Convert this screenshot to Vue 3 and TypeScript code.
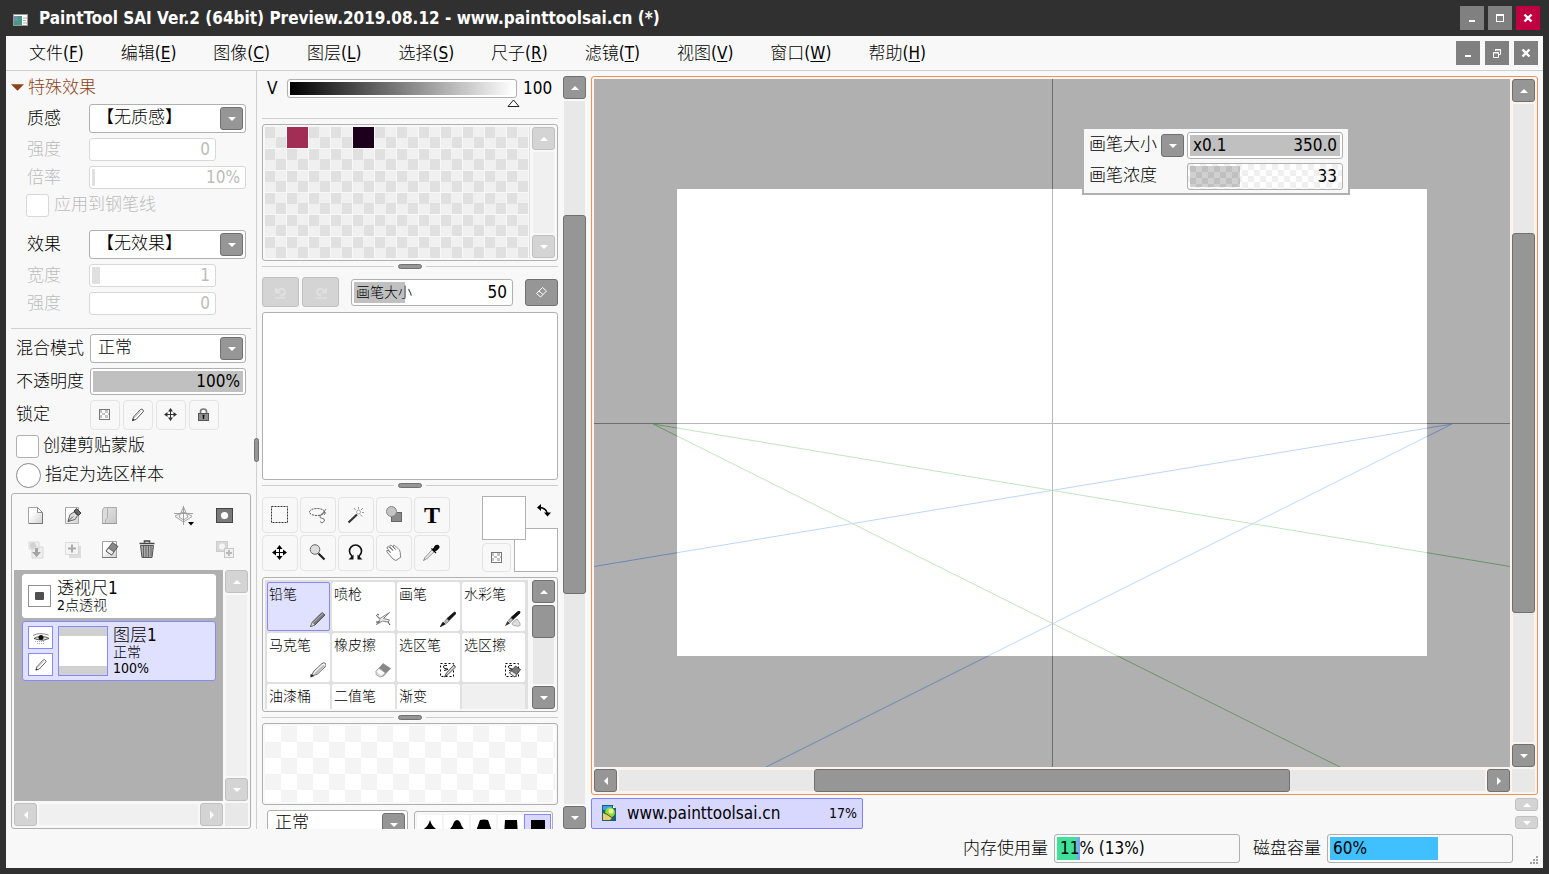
<script setup lang="ts">
import { ref } from 'vue'

interface Menu { name: string; key: string }
const menus: Menu[] = [
  { name: '文件', key: 'F' },
  { name: '编辑', key: 'E' },
  { name: '图像', key: 'C' },
  { name: '图层', key: 'L' },
  { name: '选择', key: 'S' },
  { name: '尺子', key: 'R' },
  { name: '滤镜', key: 'T' },
  { name: '视图', key: 'V' },
  { name: '窗口', key: 'W' },
  { name: '帮助', key: 'H' },
]

const locks = [
  { icon: 'checker', label: '锁定透明像素' },
  { icon: 'pencil', label: '锁定绘画' },
  { icon: 'move-small', label: '锁定移动' },
  { icon: 'lock', label: '全部锁定' },
]

const layerTools = [
  { icon: 'page', label: '新建图层', off: false },
  { icon: 'page-pen', label: '新建钢笔图层', off: false },
  { icon: 'folder', label: '新建图层组', off: false },
  { icon: '', label: '', off: false },
  { icon: 'perspective', label: '透视尺', off: false },
  { icon: 'mask', label: '图层蒙版', off: false },
  { icon: 'merge-down', label: '向下合并', off: true },
  { icon: 'add-down', label: '转写', off: true },
  { icon: 'page-erase', label: '清除图层', off: false },
  { icon: 'trash', label: '删除图层', off: false },
  { icon: '', label: '', off: false },
  { icon: 'mask-add', label: '应用蒙版', off: true },
]

const tools = [
  { icon: 'marquee', label: '选框' },
  { icon: 'lasso', label: '套索' },
  { icon: 'wand', label: '魔棒' },
  { icon: 'shape', label: '形状' },
  { icon: '', label: '文字' },
  { icon: 'move', label: '移动' },
  { icon: 'zoom', label: '缩放' },
  { icon: 'rotate', label: '旋转' },
  { icon: 'hand', label: '抓手' },
  { icon: 'dropper', label: '吸管' },
]

const brushes = [
  { name: '铅笔', icon: 'b-pencil' },
  { name: '喷枪', icon: 'b-air' },
  { name: '画笔', icon: 'b-brush' },
  { name: '水彩笔', icon: 'b-water' },
  { name: '马克笔', icon: 'b-marker' },
  { name: '橡皮擦', icon: 'b-eraser' },
  { name: '选区笔', icon: 'b-selpen' },
  { name: '选区擦', icon: 'b-selerase' },
  { name: '油漆桶', icon: '' },
  { name: '二值笔', icon: '' },
  { name: '渐变', icon: '' },
]

const swatches: Record<number, string> = { 1: '#a22e56', 4: '#1c001c' }

const tips = [
  'M10 4 Q12 12 20 15 V20 H0 V15 Q8 12 10 4Z',
  'M7 6 Q10 2 13 6 Q15 12 19 15 V20 H1 V15 Q5 12 7 6Z',
  'M6 4 Q10 3 14 4 L18 15 V20 H2 V15Z',
  'M4 4H16L17 20H3Z',
  'M3 4H17V20H3Z',
]

const activeBrush = ref(0)
const brushSize = ref(50)
const opacity = ref(100)
const brightness = ref(100)
const density = ref(33)
const scale = ref(10)
const effectWidth = ref(1)
const strength = ref(0)
const effectStrength = ref(0)
const quickSize = ref(350)
</script>

<template>
  <div class="window">
    <svg class="defs" aria-hidden="true">
      <defs>
        <linearGradient id="pg" x1="0" x2="1" y1="0" y2="1"><stop offset=".3" stop-color="#fff" /><stop offset="1" stop-color="#cfcfcf" /></linearGradient>
        <linearGradient id="fg" x1="0" x2="1" y1="0" y2="1"><stop offset="0" stop-color="#e6e6e6" /><stop offset="1" stop-color="#c6c6c6" /></linearGradient>
        <symbol id="up" viewBox="0 0 8 4"><path d="M4 0 8 4H0Z" fill="#fff" /></symbol>
        <symbol id="down" viewBox="0 0 8 4"><path d="M0 0H8L4 4Z" fill="#fff" /></symbol>
        <symbol id="left" viewBox="0 0 4 8"><path d="M4 0V8L0 4Z" fill="#fff" /></symbol>
        <symbol id="right" viewBox="0 0 4 8"><path d="M0 0V8L4 4Z" fill="#fff" /></symbol>
        <symbol id="checker" viewBox="0 0 24 24">
          <rect x="6.500" y="6.500" width="10" height="10" fill="#fff" stroke="#777" /><path d="M7 7h2v3h-2zM12 7h3v3h-3zM9 10h3v2h-3zM15 10h1v2h-1zM7 12h2v3h-2zM12 12h3v3h-3z" fill="#c4c4c4" />
        </symbol>
        <symbol id="pencil" viewBox="0 0 24 24">
          <path d="M6.500 17.500 7.500 14 14.500 6.500Q16 5.500 17 7T17 9L10 16.500Z" fill="#fff" stroke="#555" /><path d="M8 15 15 8" stroke="#999" stroke-width=".6" /><path d="M6 18 8.500 17 7 15.500Z" fill="#222" />
        </symbol>
        <symbol id="move-small" viewBox="0 0 24 24">
          <path d="M11.500 7V16M7 11.500H16" stroke="#333" fill="none" /><path d="M11.500 5 14 8.500H9ZM11.500 18 14 14.500H9ZM5 11.500 8.500 9V14ZM18 11.500 14.500 9V14Z" fill="#333" />
        </symbol>
        <symbol id="lock" viewBox="0 0 24 24">
          <path d="M8.500 11V8.500Q8.500 6 11.500 6T14.500 8.500V11" stroke="#777" stroke-width="1.600" fill="none" /><rect x="6.500" y="10.500" width="10" height="7" fill="#909090" stroke="#555" /><path d="M11.500 12V16M10.500 12.500h2" stroke="#111" stroke-width="1.400" />
        </symbol>
        <symbol id="page" viewBox="0 0 24 24">
          <path d="M4.500 3.500H13.500L18.500 8.500V19.500H4.500Z" fill="url(#pg)" stroke="#a4a4a4" /><path d="M13.500 3.500V8.500H18.500Z" fill="#fff" stroke="#777" stroke-width=".8" /><path d="M5 19.500H19M18.500 9V19" stroke="#777" />
        </symbol>
        <symbol id="page-pen" viewBox="0 0 24 24">
          <path d="M4.500 3.500H17.500V19.500H4.500Z" fill="url(#pg)" stroke="#a8a8a8" /><path d="M7 17.500 9 10.500 13 8 16.500 11.500 14 15.500Z" fill="#ddd" stroke="#444" stroke-width=".8" /><path d="M7 17.500 12 12.500" stroke="#333" stroke-width=".8" /><path d="M13 7 15.500 4.500 20 9 17.500 11.500Z" fill="#666" stroke="#222" stroke-width=".8" />
        </symbol>
        <symbol id="folder" viewBox="0 0 24 24">
          <path d="M7 3.500H18.500V19.500H4.500V6.500Z" fill="url(#fg)" stroke="#aaa" /><path d="M4.500 19V6L6 3.500H9.500V14L7.500 16V19" fill="#dcdcdc" stroke="#b0b0b0" /><path d="M4 19.500H19" stroke="#999" />
        </symbol>
        <symbol id="perspective" viewBox="0 0 24 24">
          <g fill="none" stroke="#999" stroke-width=".9"><path d="M11.500 2V21M2 9.500H21M3 12.500 11.500 18 20 12.500M11.500 3 7 13 11.500 16 16 13ZM3 12 11.500 8 20 12" /></g><path d="M16 18h6l-3 3.500Z" fill="#000" />
        </symbol>
        <symbol id="mask" viewBox="0 0 24 24"><rect x="3.500" y="4.500" width="16" height="14" fill="#7a7a7a" stroke="#444" /><circle cx="11.500" cy="11.500" r="3.600" fill="#fff" /></symbol>
        <symbol id="merge-down" viewBox="0 0 24 24">
          <path d="M5 4h10v7h-10zM8 9h11v11H8z" fill="#eee" stroke="#d8d8d8" /><circle cx="9" cy="7.500" r="3" fill="#d0d0d0" /><path d="M11 10h3v4h3l-4.500 5L8 14h3z" fill="#a4a4a4" />
        </symbol>
        <symbol id="add-down" viewBox="0 0 24 24">
          <path d="M8 8h12v12H8z" fill="#ddd" /><rect x="4.500" y="4.500" width="13" height="12" fill="#f4f4f4" stroke="#c4c4c4" stroke-dasharray="1 1" /><path d="M11 6.500v8M7 10.500h8" stroke="#aaa" stroke-width="2" />
        </symbol>
        <symbol id="page-erase" viewBox="0 0 24 24">
          <path d="M4.500 3.500H18.500V19.500H4.500Z" fill="url(#pg)" stroke="#a0a0a0" /><path d="M8 13 14.500 4.500 20 8.500 13.500 17Z" fill="#888" stroke="#444" stroke-width=".8" /><path d="M8 13 10.500 10 16 14 13.500 17Z" fill="#eee" stroke="#444" stroke-width=".7" /><path d="M4 19.500H19" stroke="#777" />
        </symbol>
        <symbol id="trash" viewBox="0 0 24 24">
          <path d="M5.500 7.500H18.500L17 19.500H7Z" fill="#aaa" stroke="#555" /><path d="M8.500 8V19M11 8V19M13.500 8V19M16 8V18" stroke="#666" /><path d="M4.500 5.500H19.500M9.500 4.500V3H14.500V4.500" stroke="#444" stroke-width="1.600" fill="none" />
        </symbol>
        <symbol id="mask-add" viewBox="0 0 24 24">
          <rect x="3.500" y="3.500" width="11" height="10" fill="#d8d8d8" stroke="#ccc" /><circle cx="9" cy="8.500" r="3" fill="#f4f4f4" /><rect x="11.500" y="10.500" width="9" height="9" fill="#f0f0f0" stroke="#c8c8c8" /><path d="M16 12v6M13 15h6" stroke="#bbb" stroke-width="2" />
        </symbol>
        <symbol id="marquee" viewBox="0 0 24 24"><rect x="3.500" y="3.500" width="16" height="16" fill="none" stroke="#333" stroke-dasharray="2 1" /></symbol>
        <symbol id="lasso" viewBox="0 0 24 24">
          <ellipse cx="11" cy="9" rx="7.500" ry="3.500" fill="none" stroke="#444" stroke-dasharray="2 1" /><path d="M20 6 17 10Q13 12 14 14.500L18 16Q20 18 16 20L14 18.500M18 8Q21 10 18 12" fill="none" stroke="#666" stroke-width=".9" />
        </symbol>
        <symbol id="wand" viewBox="0 0 24 24">
          <path d="M4.500 19.500 13 11.500" stroke="#333" stroke-width="2.200" /><circle cx="14.500" cy="9" r="2" fill="#fff" stroke="#aaa" /><path d="M14.500 4v2M19 5l-2 2M20 9.500h-2M18 13.500l-1.500-2M10 5l1.500 2" stroke="#999" />
        </symbol>
        <symbol id="shape" viewBox="0 0 24 24"><rect x="9.500" y="9.500" width="10" height="9" fill="#8a8a8a" stroke="#666" /><circle cx="9.500" cy="8.500" r="5" fill="#c4c4c4" stroke="#888" /></symbol>
        <symbol id="move" viewBox="0 0 24 24">
          <path d="M11.500 6V17M6 11.500H17" stroke="#000" fill="none" /><path d="M11.500 4 14.500 8H8.500ZM11.500 19 14.500 15H8.500ZM4 11.500 8 8.500V14.500ZM19 11.500 15 8.500V14.500Z" fill="#000" />
        </symbol>
        <symbol id="zoom" viewBox="0 0 24 24"><circle cx="9" cy="8.500" r="4.800" fill="#ddd" stroke="#666" /><path d="M12.500 12.500 18.500 18.500" stroke="#222" stroke-width="2.200" /></symbol>
        <symbol id="rotate" viewBox="0 0 24 24"><path d="M8.500 17 7.500 14.500A6 6 0 1 1 15.500 14.500L14.500 17" fill="none" stroke="#111" stroke-width="1.600" /><path d="M9.500 13.500V18.500H4.500ZM13.500 13.500V18.500H18.500Z" fill="#111" /></symbol>
        <symbol id="hand" viewBox="0 0 24 24">
          <path d="M11 18 5 11Q4 9 6 9.500L8.500 11.500 5 7Q5 5 7 6L11 9.500 7.500 5Q8 3.500 9.500 4.500L13.500 8.500 11 5Q12 3.500 13.500 5L17.500 9Q18.500 11 18.500 15L19 16 14 19.500Z" fill="#fff" stroke="#666" stroke-width=".8" />
        </symbol>
        <symbol id="dropper" viewBox="0 0 24 24"><path d="M3.500 19.500 5 16.500 12 9 14 11 7 17.500Z" fill="#eee" stroke="#777" stroke-width=".8" /><path d="M11.500 7.500 16 12M13 9 15 5.500Q17 3.500 18.500 5T17 8.500L14.500 10.500Z" stroke="#000" stroke-width="1.200" fill="#111" /></symbol>
        <symbol id="swap" viewBox="0 0 16 16"><path d="M3.500 4.500Q10.500 5 11.500 11" fill="none" stroke="#000" stroke-width="1.600" /><path d="M5 1V8L1 4.500ZM8 9.500H15L11.500 13.500Z" fill="#000" /></symbol>
        <symbol id="b-pencil" viewBox="0 0 16 16"><path d="M.5 15.500 2.500 11 12 1.500 15 4 5 14Z" fill="#777" stroke="#555" /><path d="M3 12 13 2.500" stroke="#bbb" /><path d="M.5 15.500 2.500 11 5 14Z" fill="#ddd" stroke="#666" stroke-width=".6" /></symbol>
        <symbol id="b-air" viewBox="0 0 16 16"><path d="M1 4 5 7.500 14.500 1.500 8.500 7.500 14.500 9 13 11 7.500 10 1.500 13.500 5 8.500Z" fill="#eee" stroke="#666" stroke-width=".8" /><path d="M1 11h4M13 11l2 3M2 3l2 1" stroke="#444" /></symbol>
        <symbol id="b-brush" viewBox="0 0 16 16"><path d="M7 7.500 14.500 1Q16 1 15.500 3L9 9.500Z" fill="#111" stroke="#111" stroke-width=".8" /><path d="M4.500 10 7 8 9 10 6.500 12.500Z" fill="#bbb" stroke="#555" stroke-width=".6" /><path d="M0 16 3 11 5.500 13Z" fill="#111" stroke="#111" stroke-width=".6" /></symbol>
        <symbol id="b-water" viewBox="0 0 16 16"><path d="M6 6.500 13.500 0Q15.500 0 15 2L8 8.500Z" fill="#111" stroke="#111" stroke-width=".8" /><path d="M3.500 9 6 7 8 9 5 11.500Z" fill="#bbb" stroke="#555" stroke-width=".6" /><path d="M0 15 2.500 10 5 12.500Z" fill="#333" /><path d="M12 8Q16 13 15 14.500T9 14.500 12 8Z" fill="#ddd" stroke="#999" stroke-width=".8" /></symbol>
        <symbol id="b-marker" viewBox="0 0 16 16"><path d="M1.500 13.500 4 9 12 1.500Q14 0 15.500 1.500T15 5L7 12.500Z" fill="#f4f4f4" stroke="#666" /><path d="M5 12 14 3.500" stroke="#bbb" stroke-width="2" /><path d="M.5 12 4.500 14 .5 15.500Z" fill="#222" /></symbol>
        <symbol id="b-eraser" viewBox="0 0 16 16"><path d="M1 9.500 8 1.500 15.500 6.500 8 14.500Z" fill="#888" stroke="#888" stroke-width=".7" /><path d="M1 9.500 4 6 10.500 11 7 14.500Q5 16 1 12.500Z" fill="#ddd" stroke="#999" stroke-width=".8" /><path d="M1.500 9.500 4 7 9.500 11 6.500 13.500Z" fill="#fff" /></symbol>
        <symbol id="b-selpen" viewBox="0 0 16 16"><rect x=".5" y="1.500" width="13" height="13" fill="none" stroke="#000" stroke-dasharray="2 2" /><path d="M7 3.500Q3 3 3.500 5T7 7 4 8.500" fill="none" stroke="#000" /><path d="M4.500 15 6.500 11 14 3 15.500 5 8 12.500Z" fill="#ddd" stroke="#333" stroke-width=".9" /></symbol>
        <symbol id="b-selerase" viewBox="0 0 16 16"><rect x=".5" y="1.500" width="13" height="13" fill="none" stroke="#000" stroke-dasharray="2 2" /><path d="M7 3.500Q3 3 3.500 5T7 7 4 8.500" fill="none" stroke="#000" /><path d="M4.500 11 10.500 4 15.500 7.500 10 15Z" fill="#777" stroke="#444" stroke-width=".9" /><path d="M4.500 11 6.500 9 11.500 12.500 10 15Z" fill="#eee" stroke="#444" stroke-width=".7" /></symbol>
        <symbol id="undo" viewBox="0 0 16 16"><path d="M2 14H13" stroke="#e0e0e0" stroke-width="1.600" /><path d="M2 3V9.500H8.500Z" fill="#e0e0e0" /><path d="M4.500 7.500Q8 3 11 6T9 11.500H7.500" fill="none" stroke="#e0e0e0" stroke-width="2" /></symbol>
        <symbol id="eraser" viewBox="0 0 16 16"><path d="M2.500 9.500 8.500 3.500 12.500 7 6.500 13Z" fill="none" stroke="#fff" /><path d="M5 7 9 10.500" stroke="#fff" /></symbol>
        <symbol id="eye" viewBox="0 0 18 14"><path d="M1 4.500Q7 1 16.500 4" fill="none" stroke="#888" /><path d="M2 7.500Q7 4 15.500 6.500L17 7.500Q12 10.500 5 8.500Z" fill="#ddd" stroke="#333" stroke-width=".8" /><circle cx="9" cy="6.500" r="2.500" fill="#111" /><path d="M3 10.500h10M5 12.500h8" stroke="#aaa" stroke-dasharray="1 1" /></symbol>
      </defs>
    </svg>

    <header class="titlebar">
      <svg class="app-icon" viewBox="0 0 15 12"><rect x=".5" y=".5" width="14" height="11" fill="#fff" stroke="#999" /><path d="M1 2h8v9H1z" fill="#479783" /><path d="M1 2h4v5H1z" fill="#6f8fae" /><path d="M10 4h4M10 6.500h3M10 9h4" stroke="#aaa" /></svg>
      <h1>PaintTool SAI Ver.2 (64bit) Preview.2019.08.12 - www.painttoolsai.cn (*)</h1>
      <button class="wbtn" aria-label="最小化"><svg viewBox="0 0 24 24"><path d="M9 14h6v2H9z" fill="#fff" /></svg></button>
      <button class="wbtn" aria-label="最大化"><svg viewBox="0 0 24 24"><path d="M8 8h8v8H8zM9 10v5h6v-5z" fill="#fff" fill-rule="evenodd" /></svg></button>
      <button class="wbtn close" aria-label="关闭"><svg viewBox="0 0 24 24"><path d="M8.500 8.500 15.500 15.500M15.500 8.500 8.500 15.500" stroke="#fff" stroke-width="2.400" /></svg></button>
    </header>

    <div class="client">
      <nav class="menubar">
        <button v-for="m in menus" :key="m.key" class="menu">{{ m.name }}(<u>{{ m.key }}</u>)</button>
        <div class="mdi">
          <button class="wbtn" aria-label="最小化文档"><svg viewBox="0 0 24 24"><path d="M9 14h6v2H9z" fill="#fff" /></svg></button>
          <button class="wbtn" aria-label="还原文档"><svg viewBox="0 0 24 24"><path d="M10.500 10V8.500H15.500V13.500H14M8.500 11.500H13.500V16.500H8.500ZM8 12H14M10 9H16" fill="none" stroke="#fff" /></svg></button>
          <button class="wbtn" aria-label="关闭文档"><svg viewBox="0 0 24 24"><path d="M8.500 8.500 15.500 15.500M15.500 8.500 8.500 15.500" stroke="#fff" stroke-width="2.400" /></svg></button>
        </div>
      </nav>

      <main class="workspace">
        <aside class="left">
          <h2 class="section"><svg viewBox="0 0 14 7"><path d="M0 0H14L7 7Z" fill="#8c4218" /></svg>特殊效果</h2>
          <div class="form fx">
            <label for="texture">质感</label>
            <span class="combo"><select id="texture"><option>【无质感】</option></select><span class="arrow"><svg><use href="#down" /></svg></span></span>
            <label class="off" for="tex-str">强度</label>
            <span class="bar short dim"><output>{{ strength }}</output><input id="tex-str" v-model.number="strength" type="range" disabled></span>
            <label class="off" for="tex-scale">倍率</label>
            <span class="bar dim"><i :style="{ width: '3px' }" /><output>{{ scale }}%</output><input id="tex-scale" v-model.number="scale" type="range" disabled></span>
          </div>
          <div class="check fx-check off"><input id="pen-line" type="checkbox" disabled><label for="pen-line">应用到钢笔线</label></div>
          <div class="form fx">
            <label for="effect">效果</label>
            <span class="combo"><select id="effect"><option>【无效果】</option></select><span class="arrow"><svg><use href="#down" /></svg></span></span>
            <label class="off" for="eff-w">宽度</label>
            <span class="bar short dim"><i :style="{ width: '8px' }" /><output>{{ effectWidth }}</output><input id="eff-w" v-model.number="effectWidth" type="range" disabled></span>
            <label class="off" for="eff-s">强度</label>
            <span class="bar short dim"><output>{{ effectStrength }}</output><input id="eff-s" v-model.number="effectStrength" type="range" disabled></span>
          </div>
          <hr>
          <div class="form blend">
            <label for="mode">混合模式</label>
            <span class="combo"><select id="mode"><option>正常</option></select><span class="arrow"><svg><use href="#down" /></svg></span></span>
            <label for="opacity">不透明度</label>
            <span class="bar tall"><i :style="{ width: opacity + '%' }" /><output>{{ opacity }}%</output><input id="opacity" v-model.number="opacity" type="range"></span>
            <span>锁定</span>
            <span class="locks"><button v-for="l in locks" :key="l.icon" class="flat" :aria-label="l.label"><svg><use :href="'#' + l.icon" /></svg></button></span>
          </div>
          <div class="check clip"><input id="clip" type="checkbox"><label for="clip">创建剪贴蒙版</label></div>
          <div class="check sample"><input id="sample" type="radio"><label for="sample">指定为选区样本</label></div>

          <section class="layers frame">
            <div class="layer-tools">
              <template v-for="(t, i) in layerTools" :key="i">
                <button v-if="t.icon" class="bare" :aria-label="t.label" :disabled="t.off"><svg><use :href="'#' + t.icon" /></svg></button>
                <span v-else />
              </template>
            </div>
            <div class="layer-body">
              <div class="layer-list">
                <div class="layer ruler">
                  <button class="dot" aria-label="显示透视尺"><b /></button>
                  <div class="ltext"><p>透视尺1</p><p class="sm">2点透视</p></div>
                </div>
                <div class="layer selected">
                  <div class="lbtns">
                    <button aria-label="显示图层"><svg class="eye"><use href="#eye" /></svg></button>
                    <button aria-label="编辑图层"><svg><use href="#pencil" /></svg></button>
                  </div>
                  <div class="thumbnail"><b /></div>
                  <div class="ltext"><p>图层1</p><p class="sm">正常</p><p class="sm">100%</p></div>
                </div>
              </div>
              <div class="sb v dis"><button disabled aria-label="向上"><svg><use href="#up" /></svg></button><div class="track" /><button disabled aria-label="向下"><svg><use href="#down" /></svg></button></div>
              <div class="sb h dis"><button disabled aria-label="向左"><svg><use href="#left" /></svg></button><div class="track" /><button disabled aria-label="向右"><svg><use href="#right" /></svg></button></div>
              <div class="corner" />
            </div>
          </section>
          <span class="vgrip" />
        </aside>

        <aside class="middle">
          <div class="stack">
            <div class="vrow">
              <label for="val">V</label>
              <span class="ramp"><b /><input id="val" v-model.number="brightness" type="range"><svg viewBox="0 0 13 8"><path d="M1 7.500 6.500 1 12 7.500Z" fill="#fff" stroke="#222" /></svg></span>
              <output>{{ brightness }}</output>
            </div>
            <hr>
            <div class="swatches frame">
              <div class="cells"><button v-for="n in 72" :key="n" :aria-label="'色板 ' + n" :class="{ filled: swatches[n - 1] }" :style="{ backgroundColor: swatches[n - 1] }" /></div>
              <div class="sb v dis"><button disabled aria-label="向上"><svg><use href="#up" /></svg></button><div class="track" /><button disabled aria-label="向下"><svg><use href="#down" /></svg></button></div>
            </div>
            <div class="splitter"><b /></div>
            <div class="quick">
              <button class="undo" disabled aria-label="撤销"><svg><use href="#undo" /></svg></button>
              <button class="undo redo" disabled aria-label="重做"><svg><use href="#undo" /></svg></button>
              <span class="bar tall size"><i :style="{ width: '33%' }" /><label for="bsize">画笔大小</label><output>{{ brushSize }}</output><input id="bsize" v-model.number="brushSize" type="range" max="500"></span>
              <button class="erase" aria-label="橡皮"><svg><use href="#eraser" /></svg></button>
            </div>
            <div class="frame scratch" />
            <div class="splitter"><b /></div>
            <div class="toolrow">
              <div class="tools">
                <button v-for="t in tools" :key="t.label" class="flat" :aria-label="t.label"><svg v-if="t.icon"><use :href="'#' + t.icon" /></svg><span v-else class="tee">T</span></button>
              </div>
              <div class="colors">
                <button class="fore" aria-label="前景色" />
                <button class="bare swap" aria-label="交换颜色"><svg><use href="#swap" /></svg></button>
                <button class="flat trans" aria-label="透明色"><svg><use href="#checker" /></svg></button>
                <button class="back" aria-label="背景色" />
              </div>
            </div>
            <div class="brushes frame">
              <div class="bgrid">
                <button v-for="(b, i) in brushes" :key="b.name" :class="{ on: i === activeBrush }" @click="activeBrush = i">{{ b.name }}<svg v-if="b.icon"><use :href="'#' + b.icon" /></svg></button>
                <span class="empty" />
              </div>
              <div class="sb v"><button aria-label="向上"><svg><use href="#up" /></svg></button><div class="track"><b :style="{ top: '0%', height: '42%' }" /></div><button aria-label="向下"><svg><use href="#down" /></svg></button></div>
            </div>
            <div class="splitter"><b /></div>
            <div class="frame preview"><b /></div>
            <div class="shaperow">
              <span class="combo"><select aria-label="笔刷模式"><option>正常</option></select><span class="arrow"><svg><use href="#down" /></svg></span></span>
              <div class="frame tips"><button v-for="(d, i) in tips" :key="i" :class="{ on: i === 4 }" :aria-label="'笔尖 ' + (i + 1)"><svg viewBox="0 0 20 20"><path :d="d" /></svg></button></div>
            </div>
          </div>
          <div class="sb v"><button aria-label="向上"><svg><use href="#up" /></svg></button><div class="track"><b :style="{ top: '16.2%', height: '54%' }" /></div><button aria-label="向下"><svg><use href="#down" /></svg></button></div>
        </aside>

        <section class="document">
          <div class="viewframe">
            <div class="view">
              <svg class="scene" viewBox="0 0 916 688" preserveAspectRatio="xMidYMid slice">
                <defs>
                  <clipPath id="paper"><rect x="83" y="110" width="750" height="467" /></clipPath>
                </defs>
                <g fill="none">
                  <path d="M858 345 0 487.500M858 345 172 688" stroke="#6c86b8" />
                  <path d="M59 345 916 487.500M59 345 746 688" stroke="#6a946a" />
                  <path d="M458.500 0V688M0 344.500H916" stroke="#6e6e6e" />
                </g>
                <rect x="83" y="110" width="750" height="467" fill="#fff" />
                <g fill="none" clip-path="url(#paper)">
                  <path d="M858 345 0 487.500M858 345 172 688" stroke="#bdd6ff" />
                  <path d="M59 345 916 487.500M59 345 746 688" stroke="#bfe6bf" />
                  <path d="M458.500 0V688M0 344.500H916" stroke="#b8b8b8" />
                </g>
              </svg>
              <div class="floating">
                <label for="qsize">画笔大小</label>
                <button class="arrow" aria-label="倍率"><svg><use href="#down" /></svg></button>
                <span class="bar tall"><i :style="{ width: '100%' }" /><span class="mult">x0.1</span><output>{{ quickSize.toFixed(1) }}</output><input id="qsize" v-model.number="quickSize" type="range" max="500"></span>
                <label for="qden">画笔浓度</label>
                <span />
                <span class="bar tall density"><i :style="{ width: density + '%' }" /><output>{{ density }}</output><input id="qden" v-model.number="density" type="range"></span>
              </div>
            </div>
            <div class="sb v"><button aria-label="向上"><svg><use href="#up" /></svg></button><div class="track"><b :style="{ top: '20.2%', height: '59.6%' }" /></div><button aria-label="向下"><svg><use href="#down" /></svg></button></div>
            <div class="sb h"><button aria-label="向左"><svg><use href="#left" /></svg></button><div class="track"><b :style="{ left: '22.5%', width: '55%' }" /></div><button aria-label="向右"><svg><use href="#right" /></svg></button></div>
            <div class="corner" />
          </div>
          <div class="tabs">
            <button class="tab">
              <svg viewBox="0 0 15 16"><path d="M0 0H11L14 3V16H0Z" fill="#16607a" /><path d="M1 1H10V5H1Z" fill="#3aa0e8" /><path d="M11 0 14 3H11Z" fill="#fff" /><circle cx="8" cy="7.500" r="5" fill="#8edc3c" /><circle cx="9" cy="6" r="2.500" fill="#f4f08a" /><path d="M1 8 10 13 8 15H1Z" fill="#e8d070" /><path d="M3 8 12 14" stroke="#7a4a1a" /></svg>
              <span>www.painttoolsai.cn</span><small>17%</small>
            </button>
            <div class="tabscroll"><button disabled aria-label="上一个"><svg><use href="#up" /></svg></button><button disabled aria-label="下一个"><svg><use href="#down" /></svg></button></div>
          </div>
        </section>
      </main>

      <footer class="status">
        <span>内存使用量</span>
        <div class="meter mem"><i :style="{ width: '11%' }" /><i class="sys" :style="{ width: '2%' }" /><span>11% (13%)</span></div>
        <span>磁盘容量</span>
        <div class="meter disk"><i :style="{ width: '60%' }" /><span>60%</span></div>
        <svg class="grip" viewBox="0 0 8 8"><path d="M6 0h2v2h-2zM3 3h2v2h-2zM6 3h2v2h-2zM0 6h2v2h-2zM3 6h2v2h-2zM6 6h2v2h-2z" fill="#a0a0a0" /></svg>
      </footer>
    </div>
  </div>
</template>

<style>
body { margin: 0; background: #303030; }
</style>

<style scoped>
* { box-sizing: border-box; }
.window {
  height: 100vh; display: flex; flex-direction: column; padding: 0 6px 6px; overflow: hidden;
  background: #303030; color: #000;
  font: 17px/23px "DejaVu Sans Condensed", "Noto Sans", "Noto Sans CJK SC Light", "Noto Sans CJK SC DemiLight", "Noto Sans CJK SC", sans-serif;
}
button, select, input { font: inherit; color: inherit; margin: 0; padding: 0; }
button { border: 0; background: none; display: flex; align-items: center; justify-content: center; }
svg { display: block; flex: none; }
h1, h2, p { margin: 0; font-weight: 400; font-size: 17px; }
hr { width: 100%; margin: 0; border: 0; border-top: 1px solid #cfcfcf; flex: none; }
i, b { display: block; }
.defs { position: absolute; width: 0; height: 0; }

.titlebar { height: 36px; flex: none; display: flex; align-items: center; gap: 4px; padding: 0 3px 0 7px; color: #fff; }
.titlebar h1 { flex: 1; font-weight: 700; padding-left: 7px; white-space: nowrap; overflow: hidden; }
.app-icon { width: 15px; height: 12px; margin-top: 4px; }
.wbtn { width: 24px; height: 24px; background: #808080; }
.wbtn svg { width: 24px; height: 24px; }
.close { background: #c00040; }

.client { flex: 1; min-height: 0; display: flex; flex-direction: column; background: #f8f8f8; }
.menubar { height: 35px; flex: none; display: flex; align-items: center; gap: 37px; padding: 0 5px 0 23px; border-bottom: 1px solid #cfcfcf; }
.menu { white-space: nowrap; display: block; }
.menu u { text-underline-offset: 2px; }
.mdi { margin-left: auto; display: flex; gap: 5px; }

.workspace { flex: 1; min-height: 0; display: flex; }
.left { width: 251px; flex: none; position: relative; display: flex; flex-direction: column; padding: 0 5px; border-right: 1px solid #cfcfcf; }
.section { display: flex; align-items: center; gap: 4px; height: 33px; padding-bottom: 1px; flex: none; color: #8c4218; }
.section svg { width: 13px; height: 7px; }
.form { display: grid; align-items: center; }
.form label, .form > span:not([class]) { line-height: 20px; padding-bottom: 2px; }
.fx { grid-template-columns: 62px 157px; padding-left: 16px; gap: 5px 0; }
.blend { grid-template-columns: 74px 156px; padding-left: 5px; row-gap: 5px; margin-top: 5px; }
.off { color: #bcbcbc; }
.combo { display: flex; flex: none; position: relative; height: 29px; border: 1px solid #b0b0b0; border-radius: 3px; background: #fff; }
.combo select { flex: 1; min-width: 0; appearance: none; border: 0; background: none; padding: 0 26px 2px 7px; line-height: 23px; }
.arrow { width: 23px; height: 23px; background: #969696; border: 1px solid #707070; border-radius: 3px; display: flex; align-items: center; justify-content: center; }
.combo .arrow { position: absolute; right: 2px; top: 2px; pointer-events: none; }
.arrow svg { width: 8px; height: 4px; }
.bar { position: relative; display: flex; align-items: center; height: 23px; padding: 2px; border: 1px solid #b0b0b0; border-radius: 3px; background: #fff; }
.bar i { height: 100%; background: #c0c0c0; }
.bar output { position: absolute; right: 5px; }
.bar input { position: absolute; inset: 0; width: 100%; height: 100%; opacity: 0; }
.bar.dim { border-color: #d8d8d8; color: #bcbcbc; }
.bar.dim i { background: #e0e0e0; }
.bar.short { width: 127px; }
.bar.tall { height: 27px; }
.check { display: flex; align-items: center; flex: none; }
.check label { line-height: 20px; padding-bottom: 3px; }
.check input { appearance: none; width: 23px; height: 23px; border: 1px solid #b0b0b0; border-radius: 3px; background: #fff; }
.check.off input { border-color: #d8d8d8; }
.fx-check { gap: 5px; padding-left: 15px; margin: 5px 0 13px; }
.left hr { margin-top: 13px; }
.locks { display: flex; gap: 3px; }
.flat { border: 1px solid #e4e4e4; border-radius: 4px; background: #f8f8f8; }
.flat svg { width: 24px; height: 24px; }
.locks .flat { width: 30px; height: 30px; }
.clip { gap: 4px; padding-left: 5px; margin-top: 5px; }
.sample { gap: 4px; padding-left: 5px; margin-top: 5px; }
.sample input { width: 25px; height: 25px; border-radius: 50%; border-color: #888; }
.frame { border: 1px solid #b0b0b0; border-radius: 3px; padding: 2px; flex: none; }
.layers { flex: 1; min-height: 0; margin-top: 5px; display: flex; flex-direction: column; }
.layer-tools { height: 74px; display: grid; grid-template-columns: 37px 37px 37px 37px 37px 1fr; grid-template-rows: 34px 34px; padding: 3px 0 3px 3px; flex: none; }
.layer-tools .bare svg { width: 24px; height: 24px; }
.layer-body { flex: 1; min-height: 0; display: grid; grid-template: minmax(0, 1fr) 23px / minmax(0, 1fr) 23px; gap: 2px; }
.layer-list { background: #b0b0b0; padding: 4px 7px 0 8px; display: flex; flex-direction: column; gap: 3px; }
.layer { display: flex; border-radius: 3px; }
.ruler { height: 44px; background: #fff; padding: 0 5px; align-items: center; gap: 6px; border: 1px solid #fff; }
.dot { width: 23px; height: 22px; border: 1px solid #909090; background: #fff; }
.dot b { width: 9px; height: 8px; background: #505050; border-radius: 1px; }
.selected { height: 60px; background: #e0e0ff; border: 1px solid #8888f8; padding: 4px 5px; gap: 5px; }
.lbtns { display: flex; flex-direction: column; gap: 4px; }
.lbtns button { width: 25px; height: 23px; border: 1px solid #8888f8; background: #fff; }
.lbtns svg { width: 22px; height: 22px; }
.lbtns .eye { width: 18px; height: 14px; }
.thumbnail { width: 50px; height: 50px; border: 1px solid #8888f8; background: #d0d0d0; padding: 9px 0; }
.thumbnail b { height: 30px; background: #fff; }
.ltext p { line-height: 18px; }
.ltext .sm { font-size: 14px; line-height: 16px; }
.vgrip { position: absolute; right: -3px; top: 367px; width: 5px; height: 24px; background: #969696; border: 1px solid #707070; border-radius: 3px; }

.sb { display: flex; gap: 2px; }
.sb.v { flex-direction: column; width: 23px; flex: none; }
.sb.h { height: 23px; }
.sb button { width: 23px; height: 23px; flex: none; background: #969696; border: 1px solid #707070; border-radius: 3px; }
.sb.v button svg { width: 8px; height: 4px; }
.sb.h button svg { width: 4px; height: 8px; }
.sb .track { flex: 1; position: relative; background: #e8e8e8; }
.sb.v .track { margin: 0 1px; }
.sb.h .track { margin: 1px 0; }
.sb .track b { position: absolute; background: #969696; border: 1px solid #707070; border-radius: 3px; }
.sb.v .track b { left: -1px; right: -1px; }
.sb.h .track b { top: -1px; bottom: -1px; }
.sb.dis button, .undo, .tabscroll button { background: #d4d4d4; border: 1px solid #c0c0c0; }
.sb.dis .track { background: #f0f0f0; }
.corner { background: #e8e8e8; }

.middle { width: 334px; flex: none; display: flex; padding: 5px 4px 0 5px; gap: 5px; }
.stack { width: 296px; flex: none; overflow: hidden; display: flex; flex-direction: column; }
.vrow { display: flex; align-items: center; gap: 6px; padding-left: 5px; height: 24px; flex: none; }
.vrow label { width: 14px; }
.ramp { position: relative; width: 230px; height: 19px; padding: 2px; border: 1px solid #b0b0b0; border-radius: 3px; background: #fff; }
.ramp b { height: 13px; background: linear-gradient(90deg, #000, #fff); }
.ramp input { position: absolute; inset: 0; width: 100%; height: 100%; opacity: 0; }
.ramp svg { position: absolute; right: -4px; top: 19px; width: 13px; height: 8px; }
.stack > hr { margin: 18px 0 5px; }
.swatches { height: 137px; display: flex; gap: 2px; }
.cells { flex: 1; display: grid; grid-template-columns: repeat(12, 21px); grid-auto-rows: 21px; gap: 1px; border-right: 1px solid #e0e0e0; }
.cells button { background: conic-gradient(#f0f0f0 0 25%, #e0e0e0 0 50%, #f0f0f0 0 75%, #e0e0e0 0); }
.cells .filled { background-image: none; }
.splitter { display: flex; align-items: center; justify-content: center; height: 5px; margin: 3px 0; gap: 4px; flex: none; }
.splitter::before, .splitter::after { content: ""; flex: 1; border-top: 1px solid #cfcfcf; }
.splitter b { width: 24px; height: 5px; background: #969696; border: 1px solid #707070; border-radius: 3px; }
.quick { display: flex; align-items: center; height: 36px; flex: none; margin: 2px 0; }
.undo { width: 37px; height: 30px; border-radius: 3px; margin-right: 3px; }
.undo svg { width: 16px; height: 16px; }
.redo svg { transform: scaleX(-1); }
.size { width: 162px; margin-left: 9px; }
.size label { position: absolute; left: 4px; font-size: 14px; }
.erase { width: 33px; height: 27px; background: #969696; border: 1px solid #707070; border-radius: 3px; margin-left: auto; }
.erase svg { width: 16px; height: 16px; }
.scratch { height: 168px; background: #fff; }
.toolrow { display: flex; justify-content: space-between; height: 86px; padding: 5px 0; flex: none; }
.tools { display: grid; grid-template-columns: repeat(5, 36px); grid-auto-rows: 36px; gap: 2px; padding-top: 1px; }
.tee { font: 700 24px/24px "Liberation Serif", serif; }
.colors { display: grid; grid-template: 32px 12px 32px / 32px 12px 32px; }
.fore, .back { border: 1px solid #b0b0b0; background: #fff; }
.fore { grid-area: 1 / 1 / 3 / 3; z-index: 1; }
.back { grid-area: 2 / 2 / 4 / 4; }
.swap { grid-area: 1 / 3; padding: 0 0 2px 3px; }
.swap svg { width: 16px; height: 16px; }
.trans { grid-area: 3 / 1; width: 29px; height: 29px; align-self: end; }
.brushes { height: 135px; display: flex; gap: 4px; overflow: hidden; }
.bgrid { flex: 1; display: grid; grid-template-columns: repeat(4, 63px); grid-auto-rows: 49px; gap: 2px; padding: 2px; background: #e0e0e0; overflow: hidden; }
.bgrid button { position: relative; align-items: flex-start; justify-content: flex-start; padding: 1px; font-size: 14px; line-height: 20px; background: #fff; border: 1px solid #fff; border-radius: 2px; }
.bgrid .on { background: #e0e0ff; border-color: #8888f8; }
.bgrid svg { position: absolute; right: 3px; bottom: 3px; width: 16px; height: 16px; }
.empty { background: #f0f0f0; border-radius: 2px; }
.preview { height: 82px; }
.preview b { height: 100%; background: repeating-conic-gradient(#f4f4f4 0 25%, #fff 0 50%) 0 0 / 32px 32px; }
.shaperow { display: flex; gap: 6px; padding: 5px 5px 0; flex: none; }
.shaperow .combo { width: 141px; }
.shaperow select { padding-bottom: 4px; }
.tips { display: flex; margin-top: 1px; padding: 2px 1px; height: 34px; }
.tips button { width: 27px; height: 28px; align-items: flex-start; padding-top: 1px; border: 1px solid #f4f4f4; background: #fff; }
.tips svg { width: 20px; height: 20px; }
.tips .on { border-color: #8888f8; background: #d8d8ff; }

.document { flex: 1; min-width: 0; display: flex; flex-direction: column; padding: 5px 5px 0 0; gap: 3px; }
.viewframe { flex: 1; min-height: 0; display: grid; grid-template: minmax(0, 1fr) 23px / minmax(0, 1fr) 23px; gap: 2px; padding: 2px; border: 1px solid #e8955c; border-radius: 3px; background: #fbf3ee; }
.view { position: relative; background: #b0b0b0; overflow: hidden; }
.scene { width: 100%; height: 100%; }
.floating { position: absolute; left: 488px; top: 48px; display: grid; grid-template-columns: 72px 23px 159px; gap: 4px 0; align-items: center; padding: 3px 5px; border: 2px solid #b0b0b0; background: #f8f8f8; }
.floating .bar { margin-left: 3px; }
.floating label { padding-bottom: 2px; }
.mult { position: absolute; left: 5px; }
.density { background: repeating-conic-gradient(#fff 0 25%, #f0f0f0 0 50%) 0 0 / 12px 12px; }
.density i { background: repeating-conic-gradient(#d0d0d0 0 25%, #c0c0c0 0 50%) 0 0 / 12px 12px; }
.tabs { display: flex; justify-content: space-between; height: 31px; flex: none; }
.tab { width: 272px; justify-content: flex-start; gap: 10px; padding: 0 5px 1px 10px; border: 1px solid #8080f8; border-radius: 2px; background: #d8d8ff; }
.tab svg { width: 15px; height: 16px; }
.tab small { margin-left: auto; font-size: 14px; }
.tabscroll { display: flex; flex-direction: column; justify-content: space-between; }
.tabscroll button { width: 23px; height: 13px; border-radius: 3px; }
.tabscroll svg { width: 8px; height: 4px; }

.status { height: 39px; flex: none; display: flex; align-items: center; justify-content: flex-end; padding: 0 5px 0 0; }
.status > span { padding-bottom: 1px; }
.meter { position: relative; display: flex; width: 186px; height: 29px; margin: 0 13px 0 6px; padding: 2px; border: 1px solid #b0b0b0; border-radius: 3px; }
.meter span { position: absolute; left: 5px; top: 2px; }
.mem i { background: #40e098; }
.mem .sys { background: #80a0ff; }
.disk i { background: #40c0ff; }
.grip { width: 8px; height: 8px; align-self: flex-end; margin-bottom: 4px; margin-left: 4px; }
</style>
